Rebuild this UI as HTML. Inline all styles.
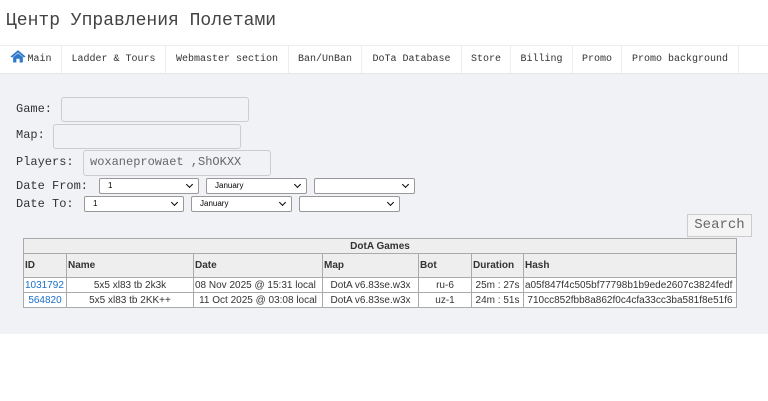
<!DOCTYPE html>
<html><head><meta charset="utf-8"><style>
*{box-sizing:border-box;margin:0;padding:0}
body{width:768px;height:401px;background:#fff;font-family:"Liberation Mono",monospace;color:#333;position:relative;overflow:hidden}
h1{position:absolute;left:6px;top:11px;font-size:18px;font-weight:normal;color:#444}
.nav{position:absolute;left:0;top:45px;width:768px;height:29px;border-top:1px solid #eee;border-bottom:1px solid #e6e6e6;background:#fff}
.nav span{position:absolute;top:0;height:27px;line-height:27px;font-size:10px;color:#333;border-right:1px solid #eee;text-align:center}
.main{position:absolute;left:0;top:74px;width:768px;height:260px;background:#f1f2f6}
.lbl{position:absolute;left:16px;font-size:12px;color:#333}
.in{position:absolute;border:1px solid #ccc;border-radius:3px;background:#f1f2f6;font-size:12px;color:#666;padding-left:6px;line-height:23px}
.sel{position:absolute;height:16px;border:1px solid #999;border-radius:2px;background:#fff;font-family:"Liberation Sans",sans-serif;font-size:8px;line-height:14px;padding-left:8px;color:#000}
.sel:after{content:"";position:absolute;right:6px;top:3px;width:4px;height:4px;border-right:1.5px solid #000;border-bottom:1.5px solid #000;transform:rotate(45deg)}
.btn{position:absolute;left:687px;top:214px;width:65px;height:23px;border:1px solid #ccc;background:#f4f4f4;font-size:14px;color:#666;text-align:center;line-height:21px}
table{position:absolute;left:23px;top:238px;width:714px;table-layout:fixed;border-collapse:collapse;font-family:"Liberation Sans",sans-serif;font-size:10px;background:#fff}
td,th{border:1px solid #aaa;padding:0 1px;height:15px;white-space:nowrap;overflow:hidden}
th{background:#eee;text-align:left;font-weight:bold}
tr.h th{height:24px}
a{color:#1a6fc9;text-decoration:none}
</style></head><body>
<h1>Центр Управления Полетами</h1>
<div class="nav">
<span style="left:0;width:62px"><svg width="18" height="14" viewBox="0 0 16 13" style="vertical-align:-2px"><path d="M8 1 L1 7 L2.5 8 L8 3.3 L13.5 8 L15 7 Z" fill="#2f79c9"/><path d="M3.5 7.5 V12.5 H6.5 V9 H9.5 V12.5 H12.5 V7.5 L8 4 Z" fill="#2f79c9"/></svg>Main</span>
<span style="left:62px;width:104px">Ladder &amp; Tours</span>
<span style="left:166px;width:123px">Webmaster section</span>
<span style="left:289px;width:73px">Ban/UnBan</span>
<span style="left:362px;width:100px">DoTa Database</span>
<span style="left:462px;width:49px">Store</span>
<span style="left:511px;width:62px">Billing</span>
<span style="left:573px;width:49px">Promo</span>
<span style="left:622px;width:117px">Promo background</span>
</div>
<div class="main"></div>
<div class="lbl" style="top:102px">Game:</div>
<div class="in" style="left:61px;top:97px;width:188px;height:25px"></div>
<div class="lbl" style="top:128px">Map:</div>
<div class="in" style="left:53px;top:124px;width:188px;height:25px"></div>
<div class="lbl" style="top:155px">Players:</div>
<div class="in" style="left:83px;top:150px;width:188px;height:26px">woxaneprowaet ,ShOKXX</div>
<div class="lbl" style="top:179px">Date From:</div>
<div class="sel" style="left:99px;top:178px;width:100px">1</div>
<div class="sel" style="left:206px;top:178px;width:101px">January</div>
<div class="sel" style="left:314px;top:178px;width:101px"></div>
<div class="lbl" style="top:197px">Date To:</div>
<div class="sel" style="left:84px;top:196px;width:100px">1</div>
<div class="sel" style="left:191px;top:196px;width:101px">January</div>
<div class="sel" style="left:299px;top:196px;width:101px"></div>
<div class="btn">Search</div>
<table>
<colgroup><col style="width:43px"><col style="width:127px"><col style="width:129px"><col style="width:96px"><col style="width:53px"><col style="width:52px"><col></colgroup>
<tr><th colspan="7" style="text-align:center">DotA Games</th></tr>
<tr class="h"><th>ID</th><th>Name</th><th>Date</th><th>Map</th><th>Bot</th><th>Duration</th><th>Hash</th></tr>
<tr><td><a>1031792</a></td><td style="text-align:center">5x5 xl83 tb 2k3k</td><td>08 Nov 2025 @ 15:31 local</td><td style="text-align:center">DotA v6.83se.w3x</td><td style="text-align:center">ru-6</td><td style="text-align:center">25m : 27s</td><td>a05f847f4c505bf77798b1b9ede2607c3824fedf</td></tr>
<tr><td style="text-align:center"><a>564820</a></td><td style="text-align:center">5x5 xl83 tb 2KK++</td><td style="text-align:center">11 Oct 2025 @ 03:08 local</td><td style="text-align:center">DotA v6.83se.w3x</td><td style="text-align:center">uz-1</td><td style="text-align:center">24m : 51s</td><td style="text-align:center">710cc852fbb8a862f0c4cfa33cc3ba581f8e51f6</td></tr>
</table>
</body></html>
